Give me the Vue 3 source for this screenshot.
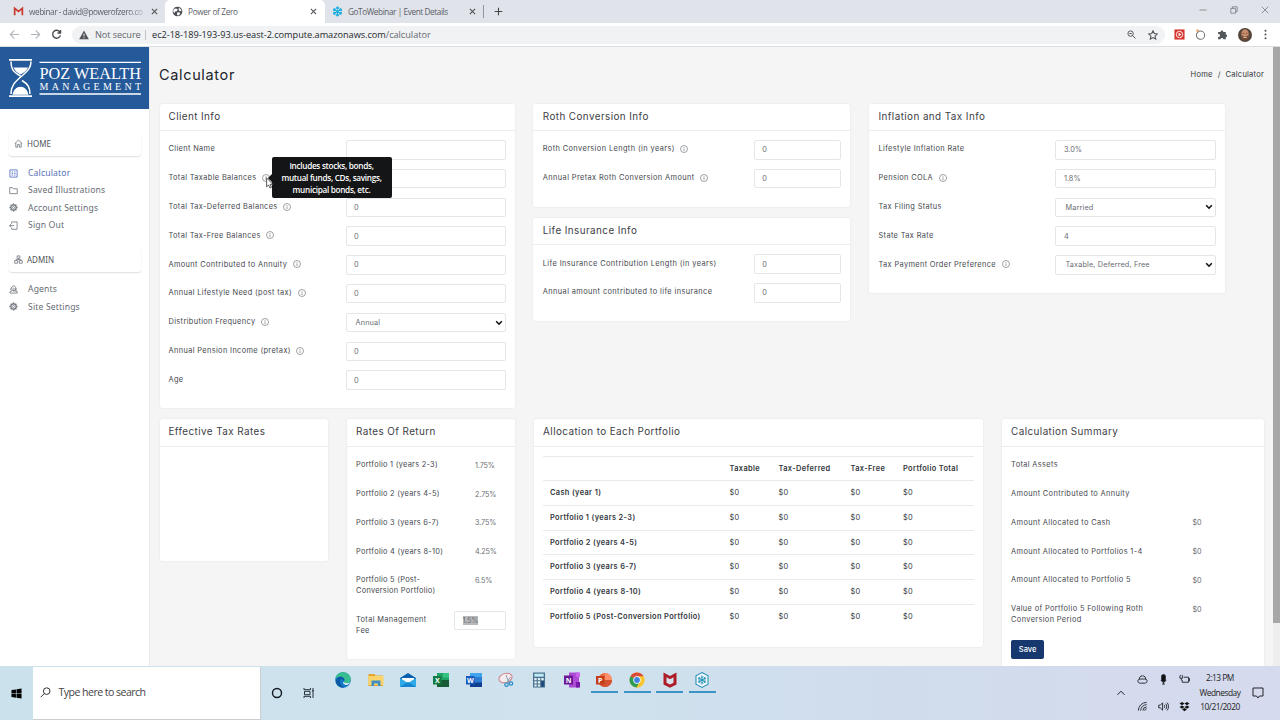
<script setup>
import { ref } from 'vue'

const clientFields = ref([
  { label: 'Client Name', value: '' },
  { label: 'Total Taxable Balances', value: '', info: true, tip: true },
  { label: 'Total Tax-Deferred Balances', value: '0', info: true },
  { label: 'Total Tax-Free Balances', value: '0', info: true },
  { label: 'Amount Contributed to Annuity', value: '0', info: true },
  { label: 'Annual Lifestyle Need (post tax)', value: '0', info: true },
  { label: 'Distribution Frequency', value: 'Annual', info: true, select: true },
  { label: 'Annual Pension Income (pretax)', value: '0', info: true },
  { label: 'Age', value: '0' },
])
const rothFields = ref([
  { label: 'Roth Conversion Length (in years)', value: '0', info: true },
  { label: 'Annual Pretax Roth Conversion Amount', value: '0', info: true },
])
const lifeFields = ref([
  { label: 'Life Insurance Contribution Length (in years)', value: '0' },
  { label: 'Annual amount contributed to life insurance', value: '0' },
])
const taxFields = ref([
  { label: 'Lifestyle Inflation Rate', value: '3.0%' },
  { label: 'Pension COLA', value: '1.8%', info: true },
  { label: 'Tax Filing Status', value: 'Married', select: true },
  { label: 'State Tax Rate', value: '4' },
  { label: 'Tax Payment Order Preference', value: 'Taxable, Deferred, Free', info: true, select: true },
])
const topColumns = [
  { name: 'client', cards: [{ title: 'Client Info', fields: clientFields }] },
  {
    name: 'roth',
    cards: [
      { title: 'Roth Conversion Info', fields: rothFields },
      { title: 'Life Insurance Info', fields: lifeFields },
    ],
  },
  { name: 'tax', cards: [{ title: 'Inflation and Tax Info', fields: taxFields }] },
]
const rates = [
  ['Portfolio 1 (years 2-3)', '1.75%'],
  ['Portfolio 2 (years 4-5)', '2.75%'],
  ['Portfolio 3 (years 6-7)', '3.75%'],
  ['Portfolio 4 (years 8-10)', '4.25%'],
  ['Portfolio 5 (Post-Conversion Portfolio)', '6.5%'],
]
const allocations = [
  'Cash (year 1)',
  'Portfolio 1 (years 2-3)',
  'Portfolio 2 (years 4-5)',
  'Portfolio 3 (years 6-7)',
  'Portfolio 4 (years 8-10)',
  'Portfolio 5 (Post-Conversion Portfolio)',
]
const summary = [
  ['Total Assets', ''],
  ['Amount Contributed to Annuity', ''],
  ['Amount Allocated to Cash', '$0'],
  ['Amount Allocated to Portfolios 1-4', '$0'],
  ['Amount Allocated to Portfolio 5', '$0'],
  ['Value of Portfolio 5 Following Roth Conversion Period', '$0'],
]
const gearTeeth = [0, 45, 90, 135, 180, 225, 270, 315]
const spokes = [0, 60, 120]
</script>

<template>
  <div class="screen">
    <div class="tabs">
      <div class="tab first">
        <svg class="fav" viewBox="0 0 12 12"><path d="M1.8 10V2.6L6 6l4.2-3.4V10" fill="none" stroke="#c93b31" stroke-width="1.9" /></svg>
        <span class="tab-text fade">webinar - david@powerofzero.co</span>
        <svg class="x" viewBox="0 0 8 8"><path d="M1 1l6 6M7 1L1 7" /></svg>
      </div>
      <div class="tab active">
        <svg class="fav" viewBox="0 0 12 12">
          <circle cx="6" cy="6" r="5.3" fill="#4d5156" />
          <path d="M2 3.2l2.4-.5 1.8 1.2-1 1.7-1.7.3L2.6 7.6 1.2 6zM7.3 2l2.4 1.5.6 2-2 .2-1-1.6zM6 6.8l2.4.4.4 1.5L6.7 10.7 5.3 9z" fill="#fff" />
        </svg>
        <span class="tab-text">Power of Zero</span>
        <svg class="x" viewBox="0 0 8 8"><path d="M1 1l6 6M7 1L1 7" /></svg>
      </div>
      <div class="tab last">
        <svg class="fav" viewBox="0 0 12 12">
          <g stroke="#19aee0" stroke-width="1.5" fill="none">
            <path v-for="a in spokes" :key="a" d="M6 .5v11M4.5 1.5L6 3.2l1.5-1.7M4.5 10.5L6 8.8l1.5 1.7" :transform="`rotate(${a} 6 6)`" />
          </g>
        </svg>
        <span class="tab-text">GoToWebinar | Event Details</span>
        <svg class="x" viewBox="0 0 8 8"><path d="M1 1l6 6M7 1L1 7" /></svg>
      </div>
      <svg class="plus" viewBox="0 0 10 10"><path d="M5 .8v8.4M.8 5h8.4" /></svg>
      <div class="window-btns">
        <svg viewBox="0 0 8 8"><path d="M.5 4h7" /></svg>
        <svg viewBox="0 0 8 8"><path d="M.8 2.4h4.8v4.8H.8zM2.4 2.4V.8h4.8v4.8H5.6" /></svg>
        <svg viewBox="0 0 8 8"><path d="M.7.7l6.6 6.6M7.3.7L.7 7.3" /></svg>
      </div>
    </div>

    <div class="toolbar">
      <svg class="nav-btn" viewBox="0 0 12 12"><path d="M11 6H1.6M5.8 1.6L1.4 6l4.4 4.4" /></svg>
      <svg class="nav-btn" viewBox="0 0 12 12"><path d="M1 6h9.4M6.2 1.6L10.6 6l-4.4 4.4" /></svg>
      <svg class="nav-btn dark" viewBox="0 0 12 12"><path d="M9.8 3.4A4.3 4.3 0 1 0 10.3 6.9M10.4 1v3.3H7" /></svg>
      <div class="omnibox">
        <svg class="warn" viewBox="0 0 10 10"><path d="M5 .6l4.8 8.6H.2z" fill="#50545a" /><path d="M5 3.6v2.8M5 7.3v1" stroke="#f1f3f4" /></svg>
        <span class="not-secure">Not secure</span>
        <span class="bar"></span>
        <span class="url">ec2-18-189-193-93.us-east-2.compute.amazonaws.com<em>/calculator</em></span>
        <svg class="omni-icon" viewBox="0 0 10 10"><circle cx="4" cy="4" r="3" /><path d="M6.3 6.3L9.4 9.4M2.6 4h2.8" /></svg>
        <svg class="omni-icon star" viewBox="0 0 10 10"><path d="M5 .8l1.3 2.8 3 .4-2.2 2.1.6 3L5 7.6 2.3 9.1l.6-3L.7 4l3-.4z" /></svg>
      </div>
      <div class="exts">
        <svg viewBox="0 0 12 12">
          <path d="M.5.5h11v11H.5z" fill="#d5352c" />
          <circle cx="6" cy="6" r="3.5" fill="none" stroke="#fff" />
          <path d="M5 4.2L8 6 5 7.8z" fill="#fff" />
        </svg>
        <svg viewBox="0 0 12 12">
          <circle cx="6" cy="6.8" r="4.5" fill="none" stroke="#6e7276" stroke-width="1.1" />
          <circle cx="2.8" cy="1.8" r="1.4" fill="#eba277" />
        </svg>
        <svg viewBox="0 0 12 12"><path d="M1.2 3.2h2.7a1.5 1.5 0 1 1 3 0h2.7v2.7a1.5 1.5 0 1 1 0 3v2.3H6.9a1.5 1.5 0 1 0-3 0H1.2V8.4a1.5 1.5 0 1 0 0-2.8z" fill="#53575b" /></svg>
        <svg class="avatar" viewBox="0 0 14 14">
          <circle cx="7" cy="7" r="7" fill="#564639" />
          <path d="M3.4 6C3.4 3 4.8 1.5 7 1.5S10.6 3 10.6 6c0 3.6-1.6 6-3.6 6S3.4 9.6 3.4 6z" fill="#c98e6c" />
          <path d="M3.7 7.3C4.2 11.4 5.4 12.4 7 12.4s2.8-1 3.3-5.1L8.6 8.2H5.4z" fill="#72452f" />
          <path d="M5.3 9.3h3.4" stroke="#f3e7df" stroke-width=".9" />
          <path d="M4.7 5.4h1.5M7.8 5.4h1.5" stroke="#49301f" stroke-width=".7" />
        </svg>
        <svg class="dots" viewBox="0 0 12 12" fill="#4c4f53"><circle cx="6" cy="2" r="1.1" /><circle cx="6" cy="6" r="1.1" /><circle cx="6" cy="10" r="1.1" /></svg>
      </div>
    </div>

    <div class="page">
      <aside class="sidebar">
        <svg class="logo" viewBox="0 0 149 62">
          <rect width="149" height="62" fill="#24599a" />
          <g stroke="#fff" fill="none">
            <path d="M9 12.8h23M9 49.2h23" stroke-width="1.8" />
            <path d="M11 14.5c0 6 1 10 9.5 14.500M31 14.5c0 6-3 9-8 13.5-9 7.5-12 11-12 19M22 33.5c6 3.5 8 7 8 13.5" stroke-width="1.5" />
            <path d="M39.5 15.3H141M39.5 47H141" stroke-width="1.3" />
          </g>
          <path d="M13.5 20.5h14.5c-1 3-4 5-7.5 7-3.5-2-6-4-7-7zM12.5 47.8c1-5 4-8 8-8s7 3 8 8z" fill="#fff" />
          <text x="39.5" y="31.5" class="logo-big" textLength="101.5" lengthAdjust="spacingAndGlyphs">POZ WEALTH</text>
          <text x="39.5" y="42.5" class="logo-small" textLength="101.5">MANAGEMENT</text>
        </svg>
        <div class="section">
          <svg class="ico" viewBox="0 0 10 10"><path d="M.8 5.2L5 1.2l4.2 4M2 4.4v4.7h2V6.2h2v2.9h2V4.4" /></svg>HOME
        </div>
        <nav>
          <a class="on">
            <svg class="ico" viewBox="0 0 10 10"><path d="M1 1h8v8H1zM3 3.3h1.5M5.7 3.3h1.5M3 5h1.5M5.7 5h1.5M3 6.8h1.5M5.7 6.8h1.5" /></svg>Calculator
          </a>
          <a><svg class="ico" viewBox="0 0 10 10"><path d="M.8 8.5V1.8h3l1 1.3h4.4v5.4z" /></svg>Saved Illustrations</a>
          <a>
            <svg class="ico" viewBox="0 0 10 10">
              <circle cx="5" cy="5" r="2.9" stroke-width="1.2" /><circle cx="5" cy="5" r="1.1" />
              <path v-for="a in gearTeeth" :key="a" d="M5 .5v1.6" stroke-width="1.6" :transform="`rotate(${a} 5 5)`" />
            </svg>Account Settings
          </a>
          <a><svg class="ico" viewBox="0 0 10 10"><path d="M3 3V1h6v8.2H3v-2M.6 5.1h5M2.4 3.4L.6 5.1l1.8 1.7" /></svg>Sign Out</a>
        </nav>
        <div class="section admin">
          <svg class="ico" viewBox="0 0 10 10"><path d="M3.5 1h3v2.6h-3zM.8 6.2h3.3v2.9H.8zM5.9 6.2h3.3v2.9H5.9zM5 3.6v1.3M2.4 6.2V4.9h5.2v1.3" /></svg>ADMIN
        </div>
        <nav>
          <a>
            <svg class="ico" viewBox="0 0 10 10"><path d="M3 3.5C3 2 3.9 1 5.2 1s2.3 1 2.3 2.5S6.6 6.4 5.2 6.4 3 5 3 3.5zM4 6L1 7.5V9h8.2V7.5L6.5 6M2.8 2.6L1.6 5l1 1M5.5 3v4.5M7.8 3.5v4" /></svg>Agents
          </a>
          <a>
            <svg class="ico" viewBox="0 0 10 10">
              <circle cx="5" cy="5" r="2.9" stroke-width="1.2" /><circle cx="5" cy="5" r="1.1" />
              <path v-for="a in gearTeeth" :key="a" d="M5 .5v1.6" stroke-width="1.6" :transform="`rotate(${a} 5 5)`" />
            </svg>Site Settings
          </a>
        </nav>
      </aside>

      <main>
        <header class="page-head">
          <h1>Calculator</h1>
          <div class="crumbs"><span>Home</span><span>/</span><span>Calculator</span></div>
        </header>

        <div class="top-grid">
          <div v-for="col in topColumns" :key="col.name" class="col" :class="col.name">
            <section v-for="card in col.cards" :key="card.title" class="card">
              <h2>{{ card.title }}</h2>
              <div class="fields">
                <div v-for="f in card.fields.value" :key="f.label" class="row">
                  <label>
                    {{ f.label }}
                    <span v-if="f.info" class="info">
                      <svg viewBox="0 0 8 8"><circle cx="4" cy="4" r="3.5" /><path d="M4 3.4v2.6M4 2v.8" /></svg>
                      <span v-if="f.tip" class="tooltip">Includes stocks, bonds,<br />mutual funds, CDs, savings,<br />municipal bonds, etc.</span>
                      <svg v-if="f.tip" class="cursor" viewBox="0 0 8 12"><path d="M.6.8v9l2-1.8 1.4 3 1.5-.7-1.3-2.9h2.7z" fill="#fff" stroke="#333" stroke-width=".8" /></svg>
                    </span>
                  </label>
                  <div class="field" :class="{ select: f.select }">
                    <span>{{ f.value }}</span>
                    <svg v-if="f.select" viewBox="0 0 8 6"><path d="M1.2 1.2L4 4.2l2.8-3" /></svg>
                  </div>
                </div>
              </div>
            </section>
          </div>
        </div>

        <div class="bottom-grid">
          <section class="card effective"><h2>Effective Tax Rates</h2></section>
          <section class="card rates">
            <h2>Rates Of Return</h2>
            <div class="fields">
              <div v-for="r in rates" :key="r[0]" class="row">
                <label>{{ r[0] }}</label>
                <span class="plain">{{ r[1] }}</span>
              </div>
              <div class="row fee">
                <label>Total Management Fee</label>
                <div class="field"><span class="marked">1.5%</span></div>
              </div>
            </div>
          </section>
          <section class="card allocation">
            <h2>Allocation to Each Portfolio</h2>
            <table>
              <thead>
                <tr><th class="name"></th><th class="c1">Taxable</th><th class="c2">Tax-Deferred</th><th class="c3">Tax-Free</th><th>Portfolio Total</th></tr>
              </thead>
              <tbody>
                <tr v-for="a in allocations" :key="a">
                  <th>{{ a }}</th>
                  <td v-for="n in 4" :key="n">$0</td>
                </tr>
              </tbody>
            </table>
          </section>
          <section class="card summary">
            <h2>Calculation Summary</h2>
            <div class="fields">
              <div v-for="s in summary" :key="s[0]" class="row">
                <label>{{ s[0] }}</label>
                <span class="plain">{{ s[1] }}</span>
              </div>
              <button>Save</button>
            </div>
          </section>
        </div>
      </main>
      <div class="scrollbar"><div class="thumb"></div></div>
    </div>

    <footer class="taskbar">
      <div class="start">
        <svg viewBox="0 0 12 12"><path d="M.5 2.2L5.4 1.5v4.2H.5zM6 1.4L11.5.6v5.1H6zM.5 6.3h4.9v4.2L.5 9.8zM6 6.3h5.5v5.1L6 10.6z" /></svg>
      </div>
      <div class="search">
        <svg viewBox="0 0 12 12"><circle cx="7.3" cy="4.5" r="3.6" /><path d="M4.7 7.2L.8 11.1" /></svg>
        <span>Type here to search</span>
      </div>
      <div class="sys">
        <svg viewBox="0 0 12 12"><circle cx="6" cy="6" r="4.5" fill="none" stroke="#101820" stroke-width="1.4" /></svg>
        <svg viewBox="0 0 12 12"><path d="M1 1v1.7h6.5V1M1 11V9.3h6.5V11M1.5 4.3H7v3.4H1.5zM10 1v10M9 3.8h2" fill="none" stroke="#26313a" /></svg>
      </div>
      <div class="apps">
        <div class="app">
          <svg viewBox="0 0 16 16">
            <circle cx="8" cy="8" r="7.8" fill="#1379c8" />
            <path d="M.4 7C1 2.5 4.2.2 8 .2c4.5 0 8 3.3 7.8 7 0 2.8-2.2 4-4.3 4-1.8 0-3-.8-2.5-1.6C10.5 7 8 4.5 5.2 4.7 3 4.8 1.2 5.8.4 7z" fill="#38bd8e" />
            <path d="M5.5 7.5C4 10.5 6 14.5 9.5 15.5 6 16.3 2 14 1 10.5.5 8 2 5 5.2 4.7 8.5 4.5 10 7 9 9.2 8.7 7.7 7 6.8 5.5 7.5z" fill="#0c59a4" />
            <path d="M9 9.3c-.5 1.2.7 2 2.5 2 1.5 0 2.7-.4 3.5-1.3-.7 2-2 3-4 3-2.3 0-3.7-1.8-2-3.7z" fill="#eaf5fa" />
          </svg>
        </div>
        <div class="app">
          <svg viewBox="0 0 16 16"><path d="M.5 2h6l1 1.5h7.5V14H.5z" fill="#e2a62c" /><path d="M.5 4h15v9H.5z" fill="#fbd56c" /><path d="M3.5 14V8.5h9V14h-2.6v-2.500H6V14z" fill="#438fc2" /></svg>
        </div>
        <div class="app">
          <svg viewBox="0 0 16 16"><path d="M0 6l8-5 8 5v9H0z" fill="#0b5fae" /><path d="M2 6h12v6H2z" fill="#fff" /><path d="M0 6l8 5 8-5v9H0z" fill="#2faae6" /><path d="M0 15l8-5 8 5z" fill="#1386d2" /></svg>
        </div>
        <div class="app">
          <svg viewBox="0 0 16 16"><path d="M4 1h12v14H4z" fill="#21a366" /><path d="M4 8h12v7H4z" fill="#185c37" /><path d="M10 1h6v4.5h-6z" fill="#33c481" /><path d="M0 4h8.5v8.5H0z" fill="#107c41" /><text x="1.9" y="11" class="app-letter">X</text></svg>
        </div>
        <div class="app">
          <svg viewBox="0 0 16 16"><path d="M4 1h12v14H4z" fill="#2b7cd3" /><path d="M4 1h12v4H4z" fill="#41a5ee" /><path d="M4 10.5h12V15H4z" fill="#103f91" /><path d="M0 4h8.5v8.5H0z" fill="#185abd" /><text x="1" y="11" class="app-letter">W</text></svg>
        </div>
        <div class="app">
          <svg viewBox="0 0 16 16" fill="none"><ellipse cx="7.5" cy="6" rx="6.7" ry="4.6" fill="#f3ecef" stroke="#cf7c85" stroke-width="1" transform="rotate(-18 7.5 6)" /><path d="M8 3l3 8M12.5 5l-4 6" stroke="#8c9ca8" /><circle cx="8.5" cy="12.7" r="1.7" stroke="#278bc6" stroke-width="1.2" /><circle cx="13" cy="11.5" r="1.7" stroke="#278bc6" stroke-width="1.2" /></svg>
        </div>
        <div class="app">
          <svg viewBox="0 0 16 16"><path d="M2 .5h12v15H2z" fill="#46708b" /><path d="M3.3 1.7h9.4v3H3.3z" fill="#bfe9f6" /><path d="M3.3 6h2.4v2.2H3.3zM6.8 6h2.4v2.2H6.8zM10.3 6h2.4v2.2h-2.4zM3.3 9.2h2.4v2.2H3.3zM6.8 9.2h2.4v2.2H6.8zM3.3 12.4h2.4v2H3.3zM6.8 12.4h2.4v2H6.8z" fill="#e4f1f7" /><path d="M10.3 9.2h2.4v5.2h-2.4z" fill="#16427b" /></svg>
        </div>
        <div class="app">
          <svg viewBox="0 0 16 16"><path d="M5 .5h10v15H5z" fill="#ae4bd5" /><path d="M12 .5h4V5h-4z" fill="#ca64ea" /><path d="M12 10h4v5.5h-4z" fill="#7719aa" /><path d="M0 3.5h9v9H0z" fill="#6b1896" /><text x="1.7" y="10.8" class="app-letter">N</text></svg>
        </div>
        <div class="app open">
          <svg viewBox="0 0 16 16"><circle cx="9" cy="8" r="7" fill="#ed6c47" /><path d="M9 1a7 7 0 0 1 7 7H9z" fill="#ff8f6b" /><path d="M2 8h14a7 7 0 0 1-14 0z" fill="#d35230" /><path d="M0 4h8.5v8.5H0z" fill="#c43e1c" /><text x="2" y="11" class="app-letter">P</text></svg>
        </div>
        <div class="app open">
          <svg viewBox="0 0 16 16"><circle cx="8" cy="8" r="7.5" fill="#f4c430" /><path d="M8 8L1.5 4.3a7.5 7.5 0 0 1 13 0z" fill="#dc4a38" /><path d="M8 8L1.5 4.3A7.5 7.5 0 0 0 7.5 15.5L10.5 10z" fill="#2c9c54" /><path d="M8 4.3h6.5A7.5 7.5 0 0 1 7.5 15.5L11 10z" fill="#f6c733" /><circle cx="8" cy="8" r="3.7" fill="#fff" /><circle cx="8" cy="8" r="2.9" fill="#4284e4" /></svg>
        </div>
        <div class="app open">
          <svg viewBox="0 0 16 16"><path d="M1.5.5L8 4l6.5-3.5v12L8 15.7l-6.5-3.2z" fill="#ad1d28" /><path d="M4.5 5.2L8 7.2l3.500-2v5.6L8 12.5l-3.500-1.700z" fill="#d8e2ed" /></svg>
        </div>
        <div class="app open">
          <svg viewBox="0 0 16 16"><path d="M8 .6l6 3.2v8.4l-6 3.2-6-3.2V3.8z" fill="#f5fbfd" stroke="#2a91b9" stroke-width="1.1" /><g stroke="#2a91b9" stroke-width="1"><path v-for="a in spokes" :key="a" d="M8 3.5v9M6.8 4.5L8 5.7l1.2-1.2M6.8 11.5L8 10.3l1.2 1.2" fill="none" :transform="`rotate(${a} 8 8)`" /></g></svg>
        </div>
      </div>
      <div class="tray">
        <svg class="chev" viewBox="0 0 10 10"><path d="M1.5 6.8L5 3.2l3.5 3.6" /></svg>
        <div class="tray-icons">
          <svg viewBox="0 0 12 12"><path d="M2.5 6C2.5 3.5 3.5 2 6 2s3.5 1.5 3.5 4M3.5 5.5h5c1.5 0 2.5.8 2.5 2.2S10 10 8.5 10h-5C2 10 1 9.1 1 7.7s1-2.2 2.5-2.2z" /></svg>
          <svg viewBox="0 0 12 12"><rect x="4" y=".8" width="4" height="7.5" rx="1.5" fill="#111" /><path d="M3.5 6.5c0 3 5 3 5 0M6 8.5V11M4.5 11h3" /></svg>
          <svg viewBox="0 0 12 12"><path d="M5.5 3.5h5V9H3.5V6.5M10.5 5h1v2.5h-1M1 2v2.5h3V2M2.5 4.5V7M1.5 1v1M3.5 1v1" /></svg>
          <svg viewBox="0 0 12 12"><path d="M1.5 10.5A9 9 0 0 1 10.5 1.5M4 10.5a6.5 6.5 0 0 1 6.5-6.5M6.5 10.5a4 4 0 0 1 4-4M8.5 10.5a2 2 0 0 1 2-2" /></svg>
          <svg viewBox="0 0 12 12"><path d="M.8 4.5h1.7L5 2v8L2.5 7.5H.8zM6.7 4.3c.8 1 .8 2.4 0 3.4M8.4 3c1.5 1.8 1.5 4.2 0 6M10 1.8c2 2.5 2 5.9 0 8.4" /></svg>
          <svg viewBox="0 0 12 12"><path d="M3.3 1L6 2.8 3.3 4.6.6 2.8zM8.7 1l2.7 1.8-2.7 1.8L6 2.8zM3.3 4.8L6 6.6 3.3 8.4.6 6.6zM8.7 4.8l2.7 1.8-2.7 1.8L6 6.6zM6 7.7l2.6 1.7L6 11.2 3.4 9.4z" fill="#111" stroke="none" /></svg>
        </div>
        <div class="clock"><span>2:13 PM</span><span>Wednesday</span><span>10/21/2020</span></div>
        <svg class="note" viewBox="0 0 12 12"><path d="M1 1h10v8H7.5L6 11 4.5 9H1z" /></svg>
      </div>
    </footer>
  </div>
</template>

<style>
body {
  margin: 0;
  overflow: hidden;
}
</style>

<style scoped>
* {
  box-sizing: border-box;
}
.screen {
  width: 1280px;
  height: 720px;
  display: flex;
  flex-direction: column;
  overflow: hidden;
  background: #f5f5f5;
  font-family: Inter, 'Liberation Sans', sans-serif;
}
svg {
  display: block;
  flex: none;
}

/* browser */
.tabs {
  height: 23px;
  display: flex;
  align-items: center;
  background: #e0e4ea;
  font-family: 'Open Sans', sans-serif;
  font-size: 8.2px;
  letter-spacing: -0.4px;
  color: #5b6067;
}
.tab {
  height: 23px;
  display: flex;
  align-items: center;
  gap: 5px;
}
.tab.first {
  width: 165px;
  padding: 0 7px 0 13px;
}
.tab.active {
  width: 160px;
  background: #fff;
  border-radius: 5px 5px 0 0;
  padding: 0 8px 0 7px;
}
.tab.last {
  width: 159px;
  height: 13px;
  padding: 0 7px 0 7px;
  border-right: 1px solid #92979e;
}
.fav {
  width: 11px;
  height: 11px;
}
.tab-text {
  flex: 1;
  white-space: nowrap;
}
.tab.active .tab-text {
  letter-spacing: -0.3px;
}
.fade {
  mask-image: linear-gradient(90deg, #000 84%, rgba(0, 0, 0, 0.2));
}
.x {
  width: 7px;
  height: 7px;
  fill: none;
  stroke: #4d5156;
  stroke-width: 1.2;
}
.plus {
  width: 9px;
  height: 9px;
  margin-left: 10px;
  stroke: #41464c;
  stroke-width: 1.2;
}
.window-btns {
  margin-left: auto;
  margin-right: 11px;
  display: flex;
  gap: 23px;
  padding-bottom: 4px;
}
.window-btns svg {
  width: 8px;
  height: 8px;
  fill: none;
  stroke: #777b82;
  stroke-width: 0.8;
}
.toolbar {
  height: 24px;
  display: flex;
  align-items: center;
  padding-left: 9px;
  background: #fff;
  border-bottom: 1px solid #dcdee0;
}
.nav-btn {
  width: 11px;
  height: 11px;
  margin-right: 10px;
  fill: none;
  stroke: #b2b5b9;
  stroke-width: 1.2;
}
.nav-btn.dark {
  stroke: #484c51;
  stroke-width: 1.5;
}
.omnibox {
  width: 1093px;
  height: 18px;
  display: flex;
  align-items: center;
  background: #f0f2f4;
  border-radius: 9px;
  padding: 0 7px;
  font-family: 'Open Sans', sans-serif;
  font-size: 9.2px;
}
.warn {
  width: 10px;
  height: 10px;
  margin-right: 6px;
}
.not-secure {
  width: 45px;
  color: #63676d;
  white-space: nowrap;
  letter-spacing: -0.1px;
}
.bar {
  width: 1px;
  height: 10px;
  margin: 0 6px 0 5px;
  background: #c3c6ca;
}
.url {
  flex: 1;
  letter-spacing: -0.03px;
  color: #25282c;
}
.url em {
  font-style: normal;
  color: #64686e;
}
.omni-icon {
  width: 9px;
  height: 9px;
  margin-right: 12px;
  fill: none;
  stroke: #53575c;
  stroke-width: 1.1;
}
.omni-icon.star {
  width: 10px;
  height: 10px;
  margin-right: 0;
}
.exts {
  display: flex;
  align-items: center;
  gap: 10.3px;
  margin-left: 9px;
}
.exts svg {
  width: 11px;
  height: 11px;
}
.exts svg.avatar {
  width: 14px;
  height: 14px;
}
.exts svg.dots {
  margin-left: -2px;
}

/* page */
.page {
  height: 619px;
  display: flex;
  overflow: hidden;
}
.sidebar {
  width: 149.5px;
  background: #fff;
  border-right: 1px solid #ebecee;
  flex: none;
  font-family: 'Noto Sans', sans-serif;
}
.logo {
  width: 149px;
  height: 62px;
}
.logo-big {
  font-family: 'Liberation Serif', serif;
  font-size: 17px;
  fill: #fff;
}
.logo-small {
  font-family: 'Liberation Serif', serif;
  font-size: 10px;
  fill: #fff;
}
.section {
  width: 132px;
  height: 25px;
  margin: 22px 0 0 9px;
  padding-left: 5px;
  display: flex;
  align-items: center;
  gap: 4px;
  border-radius: 3px;
  box-shadow: 0 1px 1.5px #dddee1;
  font-size: 8px;
  color: #4f5359;
}
.section.admin {
  margin-top: 13.5px;
}
.ico {
  width: 9px;
  height: 9px;
  fill: none;
  stroke: #70757d;
  stroke-width: 0.9;
}
nav {
  padding: 8.5px 0 0 9px;
}
nav a {
  height: 17.3px;
  display: flex;
  align-items: center;
  gap: 10px;
  font-size: 8.6px;
  letter-spacing: 0.16px;
  color: #666b73;
}
nav a.on {
  color: #5470b4;
}
nav a.on .ico {
  stroke: #4a6cc0;
}
main {
  flex: 1;
  padding-left: 10px;
}
.page-head {
  height: 56.5px;
  padding-right: 9px;
  display: flex;
  align-items: center;
  justify-content: space-between;
}
h1 {
  margin: 0;
  padding-bottom: 1.5px;
  font-size: 14.5px;
  line-height: 18px;
  font-weight: 400;
  letter-spacing: 0.65px;
  text-indent: -0.5px;
  color: #20242c;
}
.crumbs {
  display: flex;
  gap: 5px;
  font-size: 7.6px;
  letter-spacing: 0.2px;
  padding-bottom: 2px;
  color: #33373d;
}
.top-grid {
  display: grid;
  grid-template-columns: 355px 317px 356px;
  column-gap: 18.7px;
  align-items: start;
  height: 315.8px;
}
.col {
  display: grid;
  row-gap: 11px;
}
.card {
  background: #fff;
  border-radius: 2px;
  box-shadow: 0 0 1.5px #d6d7da;
}
h2 {
  margin: 0;
  height: 27.5px;
  padding: 0 9px;
  line-height: 24.5px;
  border-bottom: 1px solid #ededef;
  font-size: 9.9px;
  font-weight: 400;
  letter-spacing: 0.42px;
  color: #3d4045;
}
.roth h2,
.tax h2,
.summary h2,
.allocation h2 {
  padding-left: 9.6px;
}
.fields {
  padding: 9px 9px 19px;
}
.roth .fields,
.tax .fields,
.summary .fields {
  padding-left: 9.6px;
}
.row {
  display: flex;
  align-items: flex-start;
  height: 28.8px;
}
.top-grid .row:last-child {
  height: 19px;
}
label {
  flex: none;
  display: flex;
  align-items: center;
  height: 19.6px;
  font-size: 7.4px;
  line-height: 10.8px;
  letter-spacing: 0.36px;
  color: #45484e;
}
.client label,
.tax label {
  width: 177px;
}
.roth label {
  width: 211px;
  letter-spacing: 0.4px;
}
.field {
  flex: 1;
  height: 19.5px;
  display: flex;
  align-items: center;
  justify-content: space-between;
  border: 1px solid #e5e6e8;
  border-radius: 2px;
  padding: 0 2px 0 7.5px;
  font-size: 7.3px;
  color: #6a6d73;
}
.field.select {
  padding-left: 9px;
  letter-spacing: 0.15px;
}
.field svg {
  width: 8px;
  height: 6px;
  fill: none;
  stroke: #111;
  stroke-width: 1.6;
}
.info {
  position: relative;
  margin-left: 5.5px;
  margin-bottom: 1.5px;
}
.info svg {
  width: 8px;
  height: 8px;
  fill: none;
  stroke: #777a80;
  stroke-width: 0.7;
}
.tooltip {
  position: absolute;
  left: 9.5px;
  top: -16.8px;
  width: 120px;
  height: 41px;
  padding-top: 3px;
  border-radius: 2px;
  background: #141516;
  color: #fff;
  text-align: center;
  font: 600 8.2px/12px 'Open Sans', sans-serif;
  letter-spacing: -0.3px;
  white-space: nowrap;
}
.tooltip::before {
  content: '';
  position: absolute;
  left: -4px;
  top: 17px;
  border: 4px solid transparent;
  border-left: 0;
  border-right-color: #141516;
}
.info svg.cursor {
  position: absolute;
  left: 4px;
  top: 3.5px;
  width: 8px;
  height: 12px;
}
.bottom-grid {
  display: grid;
  grid-template-columns: 168px 168px 449px 262px;
  column-gap: 19px;
  align-items: start;
}
.effective {
  height: 142px;
}
.rates {
  height: 239.5px;
}
.rates label {
  width: 98px;
  letter-spacing: 0.28px;
}
.rates h2,
.rates .fields {
  padding-left: 9.5px;
}
.rates .row:nth-child(5) {
  height: 40px;
}
.rates .row:nth-child(n + 5) label,
.summary .row:nth-child(6) label {
  height: auto;
  padding-top: 4.3px;
}
.rates .fee label {
  width: 82px;
  margin-right: 16px;
  letter-spacing: 0.36px;
}
.plain {
  padding-left: 21px;
  font-size: 7.2px;
  line-height: 20px;
  letter-spacing: -0.1px;
  color: #6a6d73;
}
.marked {
  background: #b9babc;
  line-height: 9px;
  letter-spacing: -0.2px;
}
.allocation {
  height: 228px;
}
table {
  width: 431px;
  margin: 9px 9px 0;
  border-collapse: collapse;
  table-layout: fixed;
  color: #33373d;
  font-size: 7.4px;
  letter-spacing: 0.2px;
}
tr {
  height: 24.65px;
}
th,
td {
  padding: 0 0 1px;
  text-align: left;
  border-top: 1px solid #e9eaec;
}
th {
  font-weight: 600;
  letter-spacing: 0.37px;
}
tbody th {
  padding-left: 7.5px;
}
.name {
  width: 187px;
}
.c1 {
  width: 49px;
}
.c2 {
  width: 72px;
}
.c3 {
  width: 52.5px;
}
.summary {
  height: 270px;
}
.summary label {
  width: 160.5px;
}
button {
  width: 33px;
  height: 19px;
  margin-top: 11px;
  padding: 0;
  border: 0;
  border-radius: 2px;
  background: #17376f;
  color: #fff;
  font: 500 7.5px Inter, sans-serif;
  display: block;
}
.scrollbar {
  width: 7px;
  background: #eeeeef;
}
.thumb {
  height: 576px;
  background: #a7a7a8;
}

/* taskbar */
.taskbar {
  height: 54px;
  display: flex;
  background: linear-gradient(90deg, #cbe2ed 0%, #cfe2ee 45%, #d0dcec 70%, #d6daee 100%);
  font-family: 'Open Sans', sans-serif;
  color: #222;
}
.start {
  width: 33px;
  display: flex;
  align-items: center;
  justify-content: center;
}
.start svg {
  width: 11px;
  height: 11px;
}
.search {
  width: 228px;
  height: 53px;
  display: flex;
  align-items: center;
  gap: 7.5px;
  margin-top: 1px;
  padding: 0 0 1.5px 7px;
  background: #fff;
  border: 1px solid #c8ced2;
  border-width: 0 1px 1px 0;
  font-size: 10.6px;
  letter-spacing: -0.55px;
  color: #444;
}
.search svg {
  width: 11px;
  height: 11px;
  fill: none;
  stroke: #222;
}
.sys {
  display: flex;
  align-items: center;
  gap: 20px;
  padding: 0 0 1px 10px;
}
.sys svg {
  width: 12px;
  height: 12px;
}
.apps {
  display: flex;
  margin-left: 11.5px;
}
.app {
  width: 32.7px;
  height: 26.5px;
  padding-top: 5.5px;
  display: flex;
  justify-content: center;
}
.app svg {
  width: 16px;
  height: 16px;
}
.app.open {
  background: linear-gradient(#3c93c6, #3c93c6) center bottom / 27px 2px no-repeat;
}
.app-letter {
  font: 700 7px 'Open Sans', sans-serif;
  fill: #fff;
}
.tray {
  margin-left: auto;
  padding-right: 16px;
  display: flex;
  align-items: center;
}
.tray svg {
  fill: none;
  stroke: #20252b;
  stroke-width: 1;
}
.chev {
  width: 10px;
  height: 10px;
  margin-right: 11px;
}
.tray-icons {
  display: grid;
  grid-template-columns: repeat(3, 11px);
  gap: 16px 10px;
  margin-right: 7px;
}
.tray-icons svg {
  width: 11px;
  height: 11px;
}
.clock {
  width: 46px;
  display: grid;
  justify-items: center;
  font-size: 8.4px;
  line-height: 14.7px;
  letter-spacing: -0.5px;
}
.note {
  width: 12px;
  height: 12px;
  margin-left: 9px;
}
</style>
